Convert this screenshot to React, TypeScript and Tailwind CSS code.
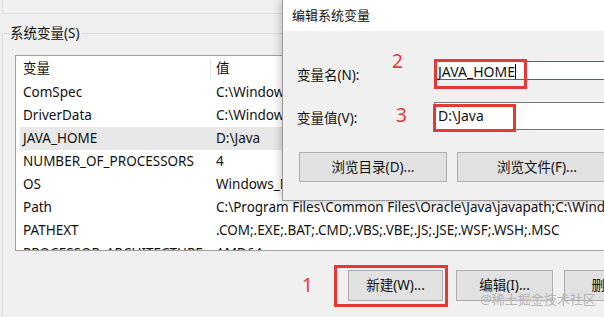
const rows = [
  { name: "ComSpec", value: "C:\\Windows\\system32\\cmd.exe" },
  { name: "DriverData", value: "C:\\Windows\\System32\\Drivers\\DriverData" },
  { name: "JAVA_HOME", value: "D:\\Java", selected: true },
  { name: "NUMBER_OF_PROCESSORS", value: "4" },
  { name: "OS", value: "Windows_NT" },
  { name: "Path", value: "C:\\Program Files\\Common Files\\Oracle\\Java\\javapath;C:\\Windows\\system32;C:\\Windows" },
  { name: "PATHEXT", value: ".COM;.EXE;.BAT;.CMD;.VBS;.VBE;.JS;.JSE;.WSF;.WSH;.MSC" },
  { name: "PROCESSOR_ARCHITECTURE", value: "AMD64" },
];

const font = "font-['Noto_Sans','Noto_Sans_CJK_SC',sans-serif]";

// Windows style push button
const WinButton = ({ label, className }: { label: string; className: string }) => (
  <div
    className={`flex shrink-0 items-center justify-center bg-[#e1e1e1] border border-[#adadad] text-[13.5px] text-[#111] ${className}`}
  >
    {label}
  </div>
);

export default function App() {
  return (
    <div className={`relative w-[604px] h-[317px] overflow-hidden bg-[#f0f0f0] text-[#111] ${font}`}>
      {/* bottom of the user variables group */}
      <div className="ml-[2px] h-[14px] border-l border-b border-[#dcdcdc]" />

      {/* system variables group */}
      <fieldset className="mt-[12px] ml-[2px] h-[400px] border-t border-l border-[#dcdcdc]">
        <legend className="ml-[6px] px-[1px] text-[13.5px] leading-[14px]">系统变量(S)</legend>

        {/* variable list */}
        <div className="mt-[15px] ml-[12px] w-[640px] h-[196px] overflow-hidden bg-white border border-[#a0a0a0] text-[13.5px]">
          <div className="ml-[4px] flex items-center h-[25px]">
            <div className="w-[190px] pl-[3px]">变量</div>
            <div className="w-px h-[20px] bg-[#e5e5e5]" />
            <div className="pl-[5px]">值</div>
          </div>
          {rows.map((row) => (
            <div
              key={row.name}
              className={`ml-[4px] flex items-center h-[23px] whitespace-nowrap ${row.selected ? "bg-[#e8e8e8]" : ""}`}
            >
              <div className="w-[191px] shrink-0 pl-[3px]">{row.name}</div>
              <div className="pl-[5px]">{row.value}</div>
            </div>
          ))}
        </div>

        {/* buttons */}
        <div className="mt-[19px] ml-[345px] flex">
          <WinButton label="新建(W)..." className="w-[95px] h-[31px]" />
          <WinButton label="编辑(I)..." className="ml-[13px] w-[97px] h-[31px]" />
          <WinButton label="删除(L)" className="ml-[11px] w-[97px] h-[31px]" />
        </div>
      </fieldset>

      {/* edit dialog */}
      <div className="absolute left-[282px] top-[-1px] w-[340px] h-[202px] bg-[#f0f0f0] border border-[#9a9a9a] shadow-[0_0_10px_rgba(0,0,0,0.28)]">
        <div className="h-[31px] bg-white pl-[9px] flex items-center text-[13px]">编辑系统变量</div>

        <div className="mt-[30px] flex items-start">
          <div className="w-[151px] shrink-0 pl-[14px] pt-[4px] leading-[20px] text-[13.5px]">变量名(N):</div>
          <div className="w-[200px] shrink-0 h-[19px] pl-[3px] pt-[1px] bg-white border border-[#0078d7] flex items-center text-[14px]">
            JAVA_HOME
            <span className="inline-block w-px h-[15px] bg-black" />
          </div>
        </div>

        <div className="mt-[17px] flex items-start">
          <div className="w-[151px] shrink-0 pl-[14px] pt-[6px] leading-[20px] text-[13.5px]">变量值(V):</div>
          <div className="w-[200px] shrink-0 h-[28px] pl-[3px] pb-[1px] bg-white border border-[#7a7a7a] flex items-center text-[14px]">
            D:\Java
          </div>
        </div>

        <div className="mt-[22px] ml-[16px] flex">
          <WinButton label="浏览目录(D)..." className="w-[148px] h-[30px]" />
          <WinButton label="浏览文件(F)..." className="ml-[10px] w-[160px] h-[30px]" />
        </div>
      </div>

      {/* red annotations */}
      <div className="absolute left-[434px] top-[59px] w-[93px] h-[30px] border-[3px] border-[#e53935]" />
      <div className="absolute left-[433px] top-[104px] w-[83px] h-[28px] border-[3px] border-[#e53935]" />
      <div className="absolute left-[334px] top-[265px] w-[114px] h-[42px] border-[3px] border-[#e53935]" />
      <div className="absolute left-[392px] top-[48px] text-[19px] leading-[26px] text-[#e53935]">2</div>
      <div className="absolute left-[396px] top-[102px] text-[19px] leading-[26px] text-[#e53935]">3</div>
      <div className="absolute left-[302px] top-[272px] text-[19px] leading-[26px] text-[#e53935]">1</div>

      {/* watermark */}
      <div className="absolute left-[480px] top-[290px] text-[13px] text-[#b4b4b4]">@稀土掘金技术社区</div>
    </div>
  );
}
